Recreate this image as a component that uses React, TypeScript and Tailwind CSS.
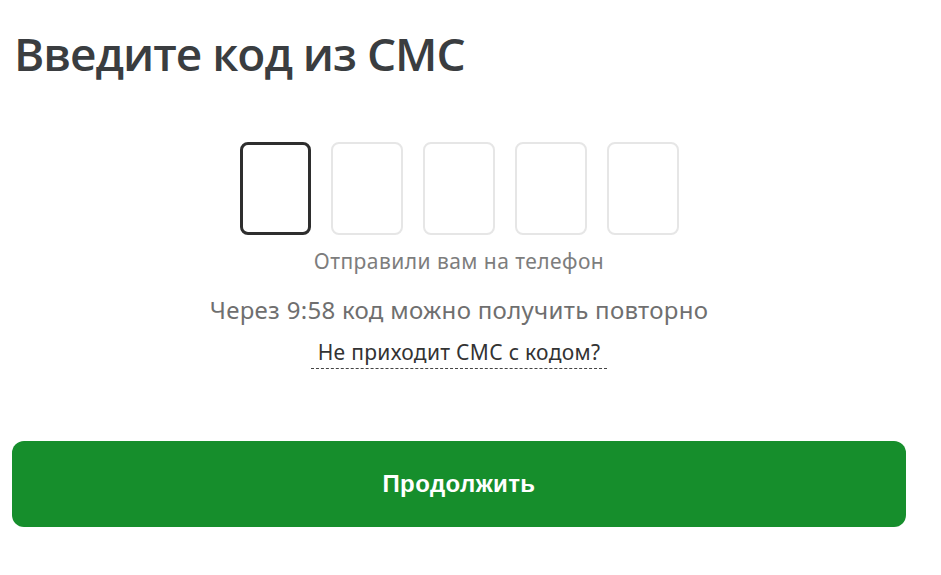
const BOXES = [0, 1, 2, 3, 4];

export default function App() {
  return (
    <div className="min-h-[575px] w-[918px] bg-white px-3 font-['Noto_Sans',sans-serif]">
      <h1 className="pt-[25px] pl-[2px] font-['Open_Sans',sans-serif] text-[46px] font-semibold leading-[56px] tracking-[-1px] text-[#3a3d40]">
        Введите код из СМС
      </h1>

      <div className="mt-[61px] flex justify-center gap-[20px]">
        {BOXES.map((i) => (
          <div
            key={i}
            className={
              i === 0
                ? "h-[93px] w-[71px] rounded-[8px] border-[3px] border-[#2e2e2e] bg-white"
                : "h-[93px] w-[72px] rounded-[8px] border-2 border-[#e6e6e6] bg-white"
            }
          />
        ))}
      </div>

      <p className="mt-[13px] text-center text-[21px] leading-[26px] tracking-[0.45px] text-[#7d7d7d]">
        Отправили вам на телефон
      </p>

      <p className="mt-[21px] text-center text-[24px] leading-[30px] tracking-[0.3px] text-[#6f6f6f]">
        Через 9:58 код можно получить повторно
      </p>

      <div className="mt-[13px] flex justify-center">
        <span className="border-b border-dashed border-[#444] px-[7px] pb-[2px] text-[21px] leading-[28px] tracking-[0.3px] text-[#333]">
          Не приходит СМС с кодом?
        </span>
      </div>

      <button className="mt-[72px] flex h-[86px] w-[894px] items-center justify-center rounded-[12px] bg-[#168e2c] font-['Liberation_Sans',sans-serif] text-[24px] font-bold tracking-[0.4px] text-white">
        Продолжить
      </button>
    </div>
  );
}
